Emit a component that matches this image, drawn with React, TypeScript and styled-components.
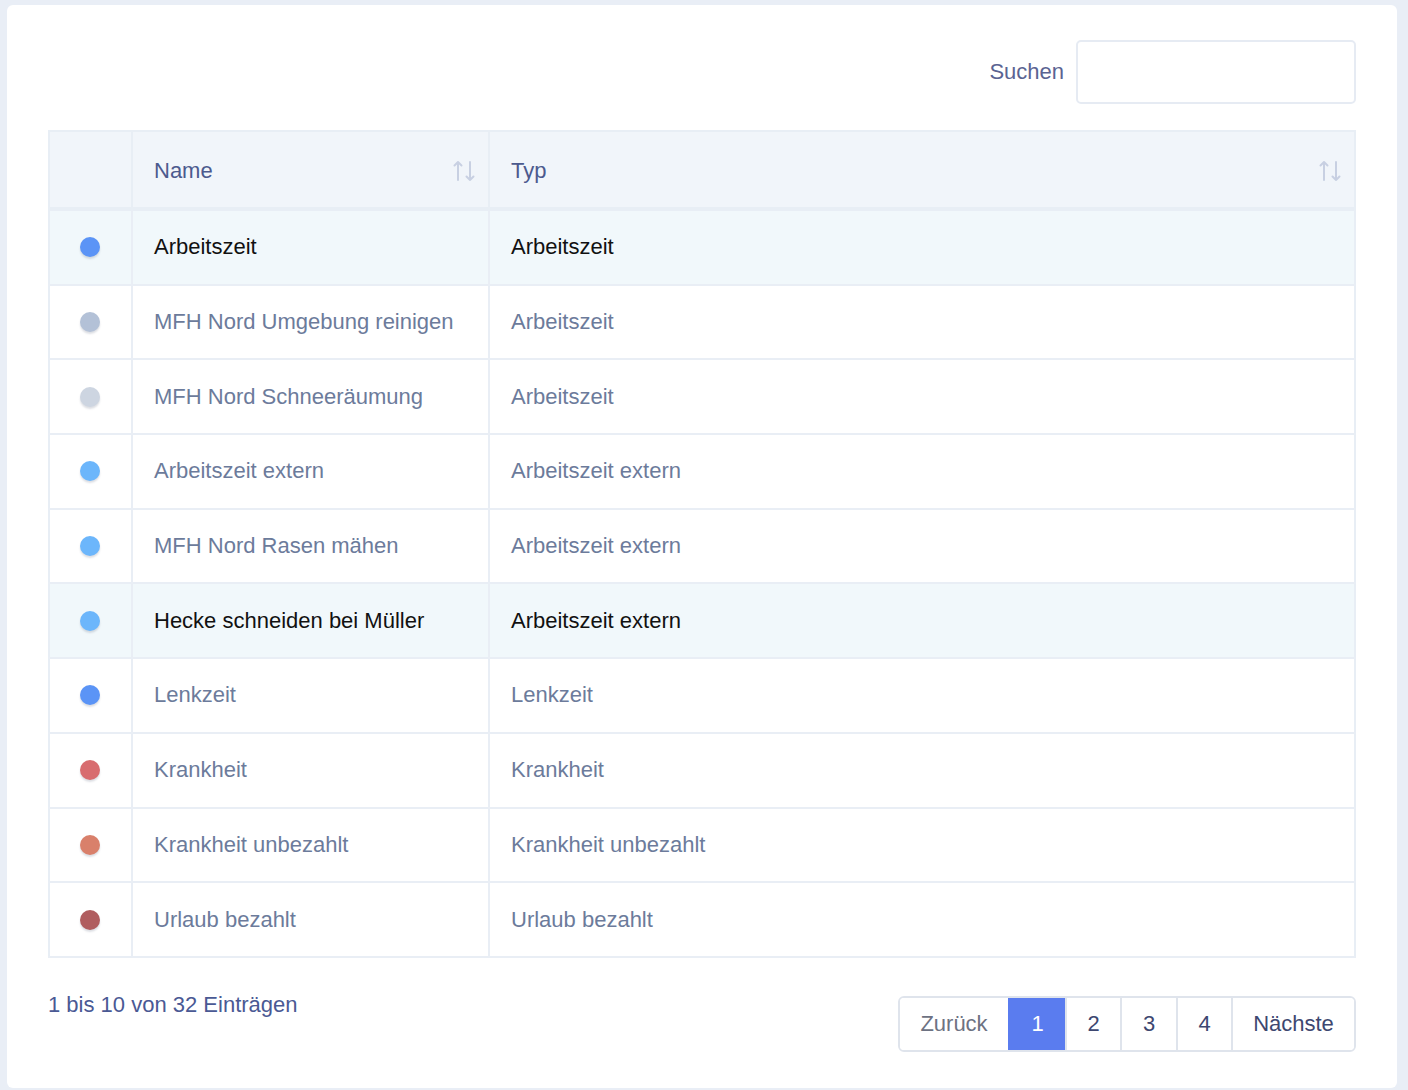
import React from 'react';
import styled, { createGlobalStyle } from 'styled-components';

const GlobalStyle = createGlobalStyle`
  html, body {
    margin: 0;
    padding: 0;
    background: #e9eef6;
  }
  body {
    padding: 5px 11px 0 7px;
    font-family: "Liberation Sans", Arial, Helvetica, sans-serif;
  }
`;

const Card = styled.div`
  background: #ffffff;
  border-radius: 6px;
  padding: 35px 41px 36px 41px;
  box-sizing: border-box;
  width: 1390px;
`;

const SearchBar = styled.div`
  display: flex;
  justify-content: flex-end;
  align-items: center;
  gap: 12px;
  margin-bottom: 26px;
`;

const SearchLabel = styled.label`
  font-size: 22px;
  color: #5a6392;
`;

const SearchInput = styled.input`
  width: 280px;
  height: 64px;
  box-sizing: border-box;
  border: 2px solid #e6ebf3;
  border-radius: 5px;
  outline: none;
  font-size: 22px;
  padding: 0 14px;
  font-family: inherit;
`;

const Table = styled.table`
  width: 100%;
  border-collapse: collapse;
  border: 2px solid #e8eef5;
  table-layout: fixed;
`;

const HeadCell = styled.th<{ $width?: number }>`
  width: ${p => (p.$width ? `${p.$width}px` : 'auto')};
  height: 78px;
  background: #f1f5fa;
  border-top: 2px solid #e8eef5;
  border-bottom: 4px solid #e8eef5;
  border-right: 2px solid #e8eef5;
  padding: 0 12px 0 21px;
  text-align: left;
  font-weight: 400;
  font-size: 22px;
  color: #4c5a8e;
  box-sizing: border-box;

  &:last-child {
    border-right: none;
  }
`;

const HeadInner = styled.div`
  display: flex;
  align-items: center;
  justify-content: space-between;
  padding-top: 3px;
`;

const Row = styled.tr<{ $active?: boolean }>`
  background: ${p => (p.$active ? '#f1f8fb' : '#ffffff')};
  color: ${p => (p.$active ? '#111111' : '#6c7b9b')};
`;

const Cell = styled.td`
  height: 72.7px;
  padding: 0 20px 0 21px;
  border-bottom: 2px solid #e9eef5;
  border-right: 2px solid #e9eef5;
  font-size: 22px;
  white-space: nowrap;

  &:last-child {
    border-right: none;
  }
`;

const DotCell = styled.td`
  height: 72.7px;
  padding: 0;
  text-align: center;
  border-bottom: 2px solid #e9eef5;
  border-right: 2px solid #e9eef5;
`;

const Dot = styled.span<{ $color: string }>`
  display: inline-block;
  width: 20px;
  height: 20px;
  border-radius: 50%;
  background: ${p => p.$color};
  box-shadow: 0 2px 2px rgba(60, 70, 100, 0.18);
  vertical-align: middle;
  margin-right: 2px;
`;

const Footer = styled.div`
  display: flex;
  justify-content: space-between;
  align-items: flex-start;
  padding-top: 30px;
`;

const Info = styled.div`
  font-size: 22px;
  line-height: 33px;
  color: #4a5994;
`;

const Pager = styled.div`
  display: flex;
  margin-top: 8px;
  border: 2px solid #dfe4ec;
  border-radius: 6px;
  overflow: hidden;
`;

const PageButton = styled.button<{ $active?: boolean; $disabled?: boolean; $width: number }>`
  width: ${p => p.$width}px;
  height: 52px;
  border: none;
  border-left: 2px solid ${p => (p.$active ? '#5a7cef' : '#dfe4ec')};
  background: ${p => (p.$active ? '#5a7cef' : '#ffffff')};
  color: ${p => (p.$active ? '#ffffff' : p.$disabled ? '#6d7282' : '#3d4770')};
  font-family: inherit;
  font-size: 22px;
  padding: 0;
  cursor: pointer;

  &:first-child {
    border-left: none;
  }
`;

const SortIcon = () => (
  <svg width="24" height="22" viewBox="0 0 24 22" fill="none" stroke="#c8d0e2" strokeWidth="2" strokeLinecap="round" strokeLinejoin="round">
    <path d="M6 2v18M2.5 5.5L6 2l3.5 3.5" />
    <path d="M18 2v18M14.5 16.5L18 20l3.5-3.5" />
  </svg>
);

const rows = [
  { color: '#5b94f6', name: 'Arbeitszeit', type: 'Arbeitszeit', active: true },
  { color: '#b3c1d7', name: 'MFH Nord Umgebung reinigen', type: 'Arbeitszeit' },
  { color: '#cdd5e1', name: 'MFH Nord Schneeräumung', type: 'Arbeitszeit' },
  { color: '#6cb6fb', name: 'Arbeitszeit extern', type: 'Arbeitszeit extern' },
  { color: '#6cb6fb', name: 'MFH Nord Rasen mähen', type: 'Arbeitszeit extern' },
  { color: '#6cb6fb', name: 'Hecke schneiden bei Müller', type: 'Arbeitszeit extern', active: true },
  { color: '#5b94f6', name: 'Lenkzeit', type: 'Lenkzeit' },
  { color: '#d86c6f', name: 'Krankheit', type: 'Krankheit' },
  { color: '#d9806b', name: 'Krankheit unbezahlt', type: 'Krankheit unbezahlt' },
  { color: '#b05d5f', name: 'Urlaub bezahlt', type: 'Urlaub bezahlt' },
];

const pages = [
  { label: 'Zurück', width: 108, disabled: true },
  { label: '1', width: 57, active: true },
  { label: '2', width: 55 },
  { label: '3', width: 56 },
  { label: '4', width: 55 },
  { label: 'Nächste', width: 123 },
];

export default function App() {
  return (
    <>
      <GlobalStyle />
      <Card>
        <SearchBar>
          <SearchLabel htmlFor="search">Suchen</SearchLabel>
          <SearchInput id="search" type="search" />
        </SearchBar>
        <Table>
          <thead>
            <tr>
              <HeadCell $width={83} />
              <HeadCell $width={357}>
                <HeadInner>
                  <span>Name</span>
                  <SortIcon />
                </HeadInner>
              </HeadCell>
              <HeadCell>
                <HeadInner>
                  <span>Typ</span>
                  <SortIcon />
                </HeadInner>
              </HeadCell>
            </tr>
          </thead>
          <tbody>
            {rows.map(row => (
              <Row key={row.name} $active={row.active}>
                <DotCell>
                  <Dot $color={row.color} />
                </DotCell>
                <Cell>{row.name}</Cell>
                <Cell>{row.type}</Cell>
              </Row>
            ))}
          </tbody>
        </Table>
        <Footer>
          <Info>1 bis 10 von 32 Einträgen</Info>
          <Pager>
            {pages.map(p => (
              <PageButton key={p.label} $width={p.width} $active={p.active} $disabled={p.disabled}>
                {p.label}
              </PageButton>
            ))}
          </Pager>
        </Footer>
      </Card>
    </>
  );
}
